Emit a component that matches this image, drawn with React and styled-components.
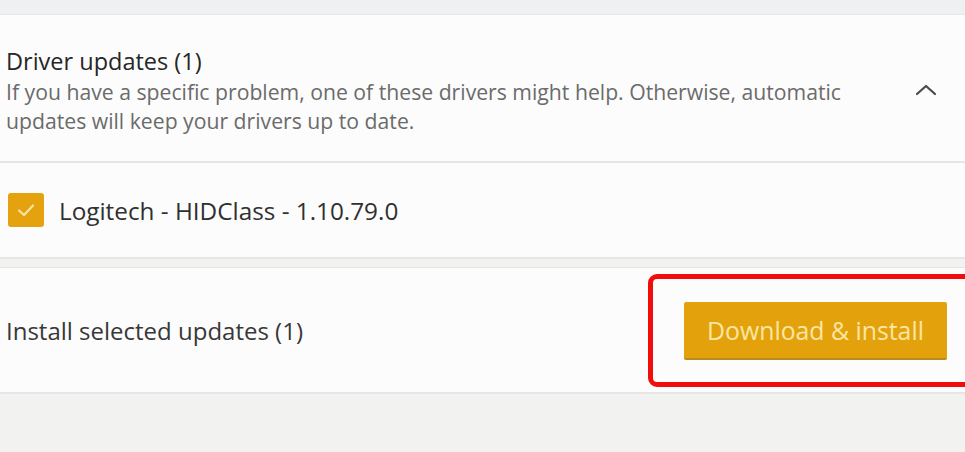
import React from 'react'
import styled, { createGlobalStyle } from 'styled-components'

const Global = createGlobalStyle`
  html, body {
    margin: 0;
    padding: 0;
    background: #f2f2f2;
  }
  body {
    font-family: "Open Sans", "Noto Sans", sans-serif;
    color: #2b2b2b;
  }
`

const Page = styled.div`
  width: 965px;
  height: 452px;
  overflow: hidden;
  background: #f2f2f1;
  display: flex;
  flex-direction: column;
`

const TopStrip = styled.div`
  height: 14px;
  background: #eef0f2;
  border-bottom: 1px solid #e6e8ea;
`

const Card = styled.section`
  background: #fcfcfc;
  display: flex;
  align-items: center;
  justify-content: space-between;
  height: ${p => p.$h}px;
  padding: 0 6px;
  border-top: ${p => (p.$top ? '1px solid #e3e3e3' : 'none')};
  border-bottom: 2px solid #e6e6e6;
  margin-bottom: ${p => p.$gap || 0}px;
  position: relative;
`

const HeaderText = styled.div`
  display: flex;
  flex-direction: column;
  padding-top: 4px;
`

const Title = styled.div`
  font-size: 23.5px;
  line-height: 32px;
  color: #262626;
`

const Subtitle = styled.div`
  font-size: 21.2px;
  line-height: 29px;
  color: #6b6b6b;
  width: 880px;
`

const Chevron = styled.svg`
  width: 22px;
  height: 14px;
  margin-right: 22px;
  margin-top: 4px;
`

const ItemRow = styled.label`
  display: flex;
  align-items: center;
  gap: 15px;
  padding-left: 2px;
`

const Check = styled.span`
  width: 36px;
  height: 34px;
  border-radius: 3px;
  background: #e3a20e;
  display: flex;
  align-items: center;
  justify-content: center;
`

const ItemName = styled.span`
  font-size: 24.3px;
  color: #303030;
`

const Label = styled.span`
  font-size: 24px;
  color: #383838;
`

const Highlight = styled.div`
  position: absolute;
  left: 648px;
  top: 6px;
  width: 330px;
  height: 113px;
  box-sizing: border-box;
  border: 5px solid #f20d0d;
  border-radius: 9px;
  pointer-events: none;
`

const Button = styled.button`
  width: 263px;
  height: 58px;
  margin-right: 12px;
  margin-top: 2px;
  border: none;
  border-bottom: 2px solid #b98a1c;
  border-radius: 2px;
  background: #e3a20b;
  color: #fbe6a3;
  font-family: "Open Sans", "Noto Sans", sans-serif;
  font-size: 24.8px;
  padding: 0;
  cursor: pointer;
`

export default function App() {
  return (
    <Page>
      <Global />
      <TopStrip />
      <Card $h={146}>
        <HeaderText>
          <Title>Driver updates (1)</Title>
          <Subtitle>
            If you have a specific problem, one of these drivers might help. Otherwise, automatic updates will keep your drivers up to date.
          </Subtitle>
        </HeaderText>
        <Chevron viewBox="0 0 22 14">
          <path d="M2 11 L11 3 L20 11" fill="none" stroke="#4a4a4a" strokeWidth="2.2" strokeLinecap="round" strokeLinejoin="round" />
        </Chevron>
      </Card>
      <Card $h={94} $gap={8}>
        <ItemRow>
          <Check>
            <svg width="20" height="16" viewBox="0 0 20 16">
              <path d="M3 8.5 L8 13 L17 3.5" fill="none" stroke="#f9e3a6" strokeWidth="2.2" strokeLinecap="round" strokeLinejoin="round" />
            </svg>
          </Check>
          <ItemName>Logitech - HIDClass - 1.10.79.0</ItemName>
        </ItemRow>
      </Card>
      <Card $h={124} $top>
        <Label>Install selected updates (1)</Label>
        <Button>Download &amp; install</Button>
        <Highlight />
      </Card>
    </Page>
  )
}
